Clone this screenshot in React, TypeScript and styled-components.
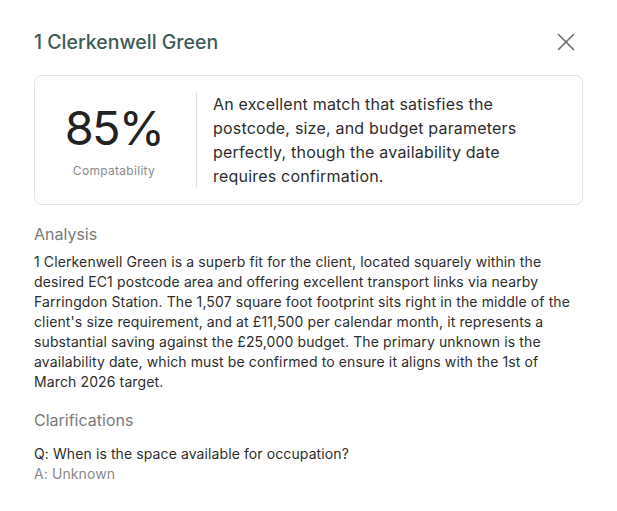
import React from "react";
import styled, { createGlobalStyle } from "styled-components";
import { X } from "lucide-react";

const Global = createGlobalStyle`
  html, body { margin: 0; padding: 0; background: #ffffff; }
  body { font-family: Inter, "Noto Sans", sans-serif; -webkit-font-smoothing: antialiased; }
  * { box-sizing: border-box; }
`;

const Page = styled.div`
  width: 617px;
  padding: 28px 34px 20px 34px;
  display: flex;
  flex-direction: column;
`;

const Header = styled.div`
  height: 28px;
  display: flex;
  align-items: center;
  justify-content: space-between;
`;

const Title = styled.h1`
  margin: 0;
  font-size: 19.5px;
  font-weight: 500;
  color: #3d5c55;
  letter-spacing: 0;
`;

const CloseButton = styled.button`
  border: none;
  background: transparent;
  padding: 0;
  margin-right: 2px;
  width: 30px;
  height: 28px;
  display: flex;
  align-items: center;
  justify-content: center;
  color: #6a6a6a;
  cursor: pointer;
`;

const Card = styled.div`
  margin-top: 19px;
  border: 1px solid #e2e2e2;
  border-radius: 8px;
  padding: 16px 40px 16px 16px;
  display: flex;
  align-items: stretch;
`;

const Score = styled.div`
  width: 146px;
  flex: none;
  padding-right: 19px;
  display: flex;
  flex-direction: column;
  align-items: center;
  justify-content: center;
  border-right: 1px solid #e2e2e2;
`;

const Percent = styled.div`
  font-size: 47px;
  font-weight: 400;
  color: #222;
  line-height: 54px;
  letter-spacing: -1.8px;
`;

const ScoreLabel = styled.div`
  margin-top: 8px;
  font-size: 12px;
  color: #8a8a8a;
  line-height: 16px;
  letter-spacing: 0.3px;
`;

const Summary = styled.p`
  margin: 0 0 0 16px;
  font-size: 16px;
  line-height: 24px;
  color: #2e2e2e;
  letter-spacing: 0.2px;
`;

const SectionTitle = styled.h2<{ $top: number }>`
  margin: ${(p) => p.$top}px 0 0 0;
  font-size: 16px;
  font-weight: 400;
  line-height: 24px;
  color: #7a7a7a;
`;

const Body = styled.p`
  margin: 6px 0 0 0;
  font-size: 14px;
  line-height: 20px;
  color: #2e2e2e;
  letter-spacing: 0.12px;
`;

const QA = styled.div`
  margin-top: 12px;
  display: flex;
  flex-direction: column;
`;

const Line = styled.div<{ $muted?: boolean }>`
  font-size: 14px;
  line-height: 20px;
  letter-spacing: 0.1px;
  color: ${(p) => (p.$muted ? "#8a8a8a" : "#2e2e2e")};
`;

export default function App() {
  return (
    <>
      <Global />
      <Page>
        <Header>
          <Title>1 Clerkenwell Green</Title>
          <CloseButton aria-label="Close">
            <X size={30} strokeWidth={1.3} />
          </CloseButton>
        </Header>
        <Card>
          <Score>
            <Percent>85%</Percent>
            <ScoreLabel>Compatability</ScoreLabel>
          </Score>
          <Summary>
            An excellent match that satisfies the postcode, size, and budget parameters
            perfectly, though the availability date requires confirmation.
          </Summary>
        </Card>
        <SectionTitle $top={17}>Analysis</SectionTitle>
        <Body>
          1 Clerkenwell Green is a superb fit for the client, located squarely within the
          desired EC1 postcode area and offering excellent transport links via nearby
          Farringdon Station. The 1,507 square foot footprint sits right in the middle of the
          client's size requirement, and at £11,500 per calendar month, it represents a
          substantial saving against the £25,000 budget. The primary unknown is the
          availability date, which must be confirmed to ensure it aligns with the 1st of
          March 2026 target.
        </Body>
        <SectionTitle $top={16}>Clarifications</SectionTitle>
        <QA>
          <Line>Q: When is the space available for occupation?</Line>
          <Line $muted>A: Unknown</Line>
        </QA>
      </Page>
    </>
  );
}
